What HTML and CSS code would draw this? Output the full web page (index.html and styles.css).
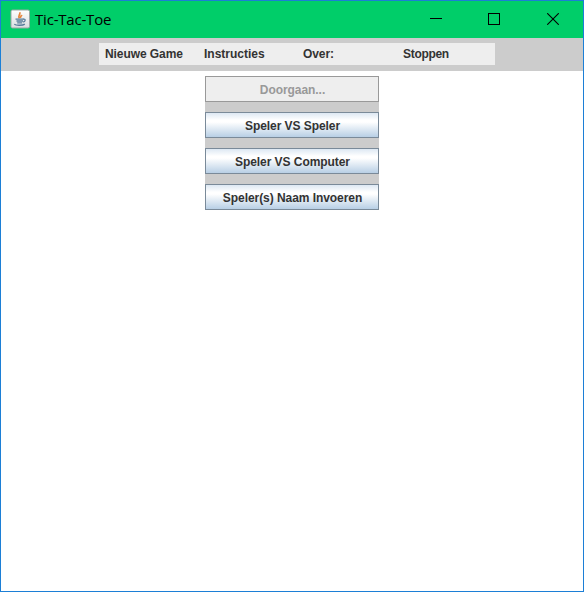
FILE: index.html
```html
<!DOCTYPE html>
<html lang="nl">
<head>
<meta charset="utf-8">
<title>Tic-Tac-Toe</title>
<link rel="stylesheet" href="styles.css">
</head>
<body>
<div class="window">
  <header class="titlebar">
    <svg class="app-icon" width="20" height="20" viewBox="0 0 20 20">
      <defs><linearGradient id="tile" x1="0" y1="0" x2="0" y2="1"><stop offset="0" stop-color="#fff"/><stop offset="1" stop-color="#d9dde0"/></linearGradient></defs>
      <rect x="1" y="1" width="18.5" height="18" rx="1.5" fill="url(#tile)" stroke="#9aa5a5"/>
      <path d="M9.3 9.2C7.5 7.2 10.6 5.8 9.8 3.2M10.6 9C10 7.5 11.5 7 11.7 5.8" fill="none" stroke="#e5863f" stroke-width="1.7"/>
      <path d="M5.5 10.2h8M6.5 12h6.5M7.2 13.8h5" fill="none" stroke="#587c9a" stroke-width="1.3"/>
      <path d="M13 10.2c3-.6 2.6 2.2.2 2.8M4.3 15.3c2 1.4 8.5 1.2 10.5-.2" fill="none" stroke="#587c9a" stroke-width="1.3"/>
    </svg>
    <h1 class="title">Tic-Tac-Toe</h1>
    <div class="controls">
      <svg class="minimize" width="12" height="12" viewBox="0 0 12 12" shape-rendering="crispEdges"><path d="M0 5.5h12" stroke="#000"/></svg>
      <svg width="12" height="12" viewBox="0 0 12 12" shape-rendering="crispEdges"><path d="M.5 .5h11v11H.5z" fill="none" stroke="#000"/></svg>
      <svg width="12" height="12" viewBox="0 0 12 12"><path d="M.2 .2l11.6 11.6M11.8 .2L.2 11.8" stroke="#000" stroke-width="1.1"/></svg>
    </div>
  </header>
  <div class="toolbar">
    <nav class="menu">
      <span class="item">Nieuwe Game</span>
      <span class="item">Instructies</span>
      <span class="item">Over:</span>
      <span class="item stop">Stoppen</span>
    </nav>
  </div>
  <main class="content">
    <div class="buttons">
      <button class="btn" disabled>Doorgaan...</button>
      <button class="btn">Speler VS Speler</button>
      <button class="btn">Speler VS Computer</button>
      <button class="btn">Speler(s) Naam Invoeren</button>
    </div>
  </main>
</div>
</body>
</html>
```
FILE: styles.css
```css
* { box-sizing: border-box; }
body { margin: 0; font: bold 12px/16px "Liberation Sans", Arial, sans-serif; color: #333; }
.window { height: 592px; border: 1px solid #1c7fd6; background: #fff; }
.titlebar { display: flex; align-items: flex-start; height: 37px; padding: 8px 24px 0 9px; background: #00ce69; }
.app-icon { flex: none; }
.title { margin: 0 0 0 5px; font: 15px/20px "Open Sans", "Noto Sans", sans-serif; color: #000; letter-spacing: -0.2px; }
.controls { display: flex; gap: 47px; margin: 4px 0 0 auto; }
.controls svg { display: block; }
.controls .minimize { margin-right: -1px; }
.toolbar { display: flex; height: 33px; padding: 5px 0 0 98px; background: #ccc; }
.menu { display: grid; grid-template-columns: repeat(4, 99px); width: 396px; height: 22px; background: #eee; }
.item { padding: 3px 0 0 6px; white-space: nowrap; letter-spacing: -0.08px; }
.item:nth-child(2) { letter-spacing: 0; }
.item.stop { padding-left: 7px; letter-spacing: -0.3px; }
.content { display: flex; justify-content: center; padding-top: 5px; }
.buttons { display: flex; flex-direction: column; gap: 10px; width: 174px; background: #ccc; }
.btn { height: 26px; padding: 2px 0 0 1px; border: 1px solid #7a8a99; background: linear-gradient(#dde8f3 0, #fff 30%, #fff 38%, #b8cfe5 100%); color: #333; font: inherit; letter-spacing: -0.06px; white-space: nowrap; }
.btn:disabled { border-color: #999; background: #eee; color: #999; }
```
